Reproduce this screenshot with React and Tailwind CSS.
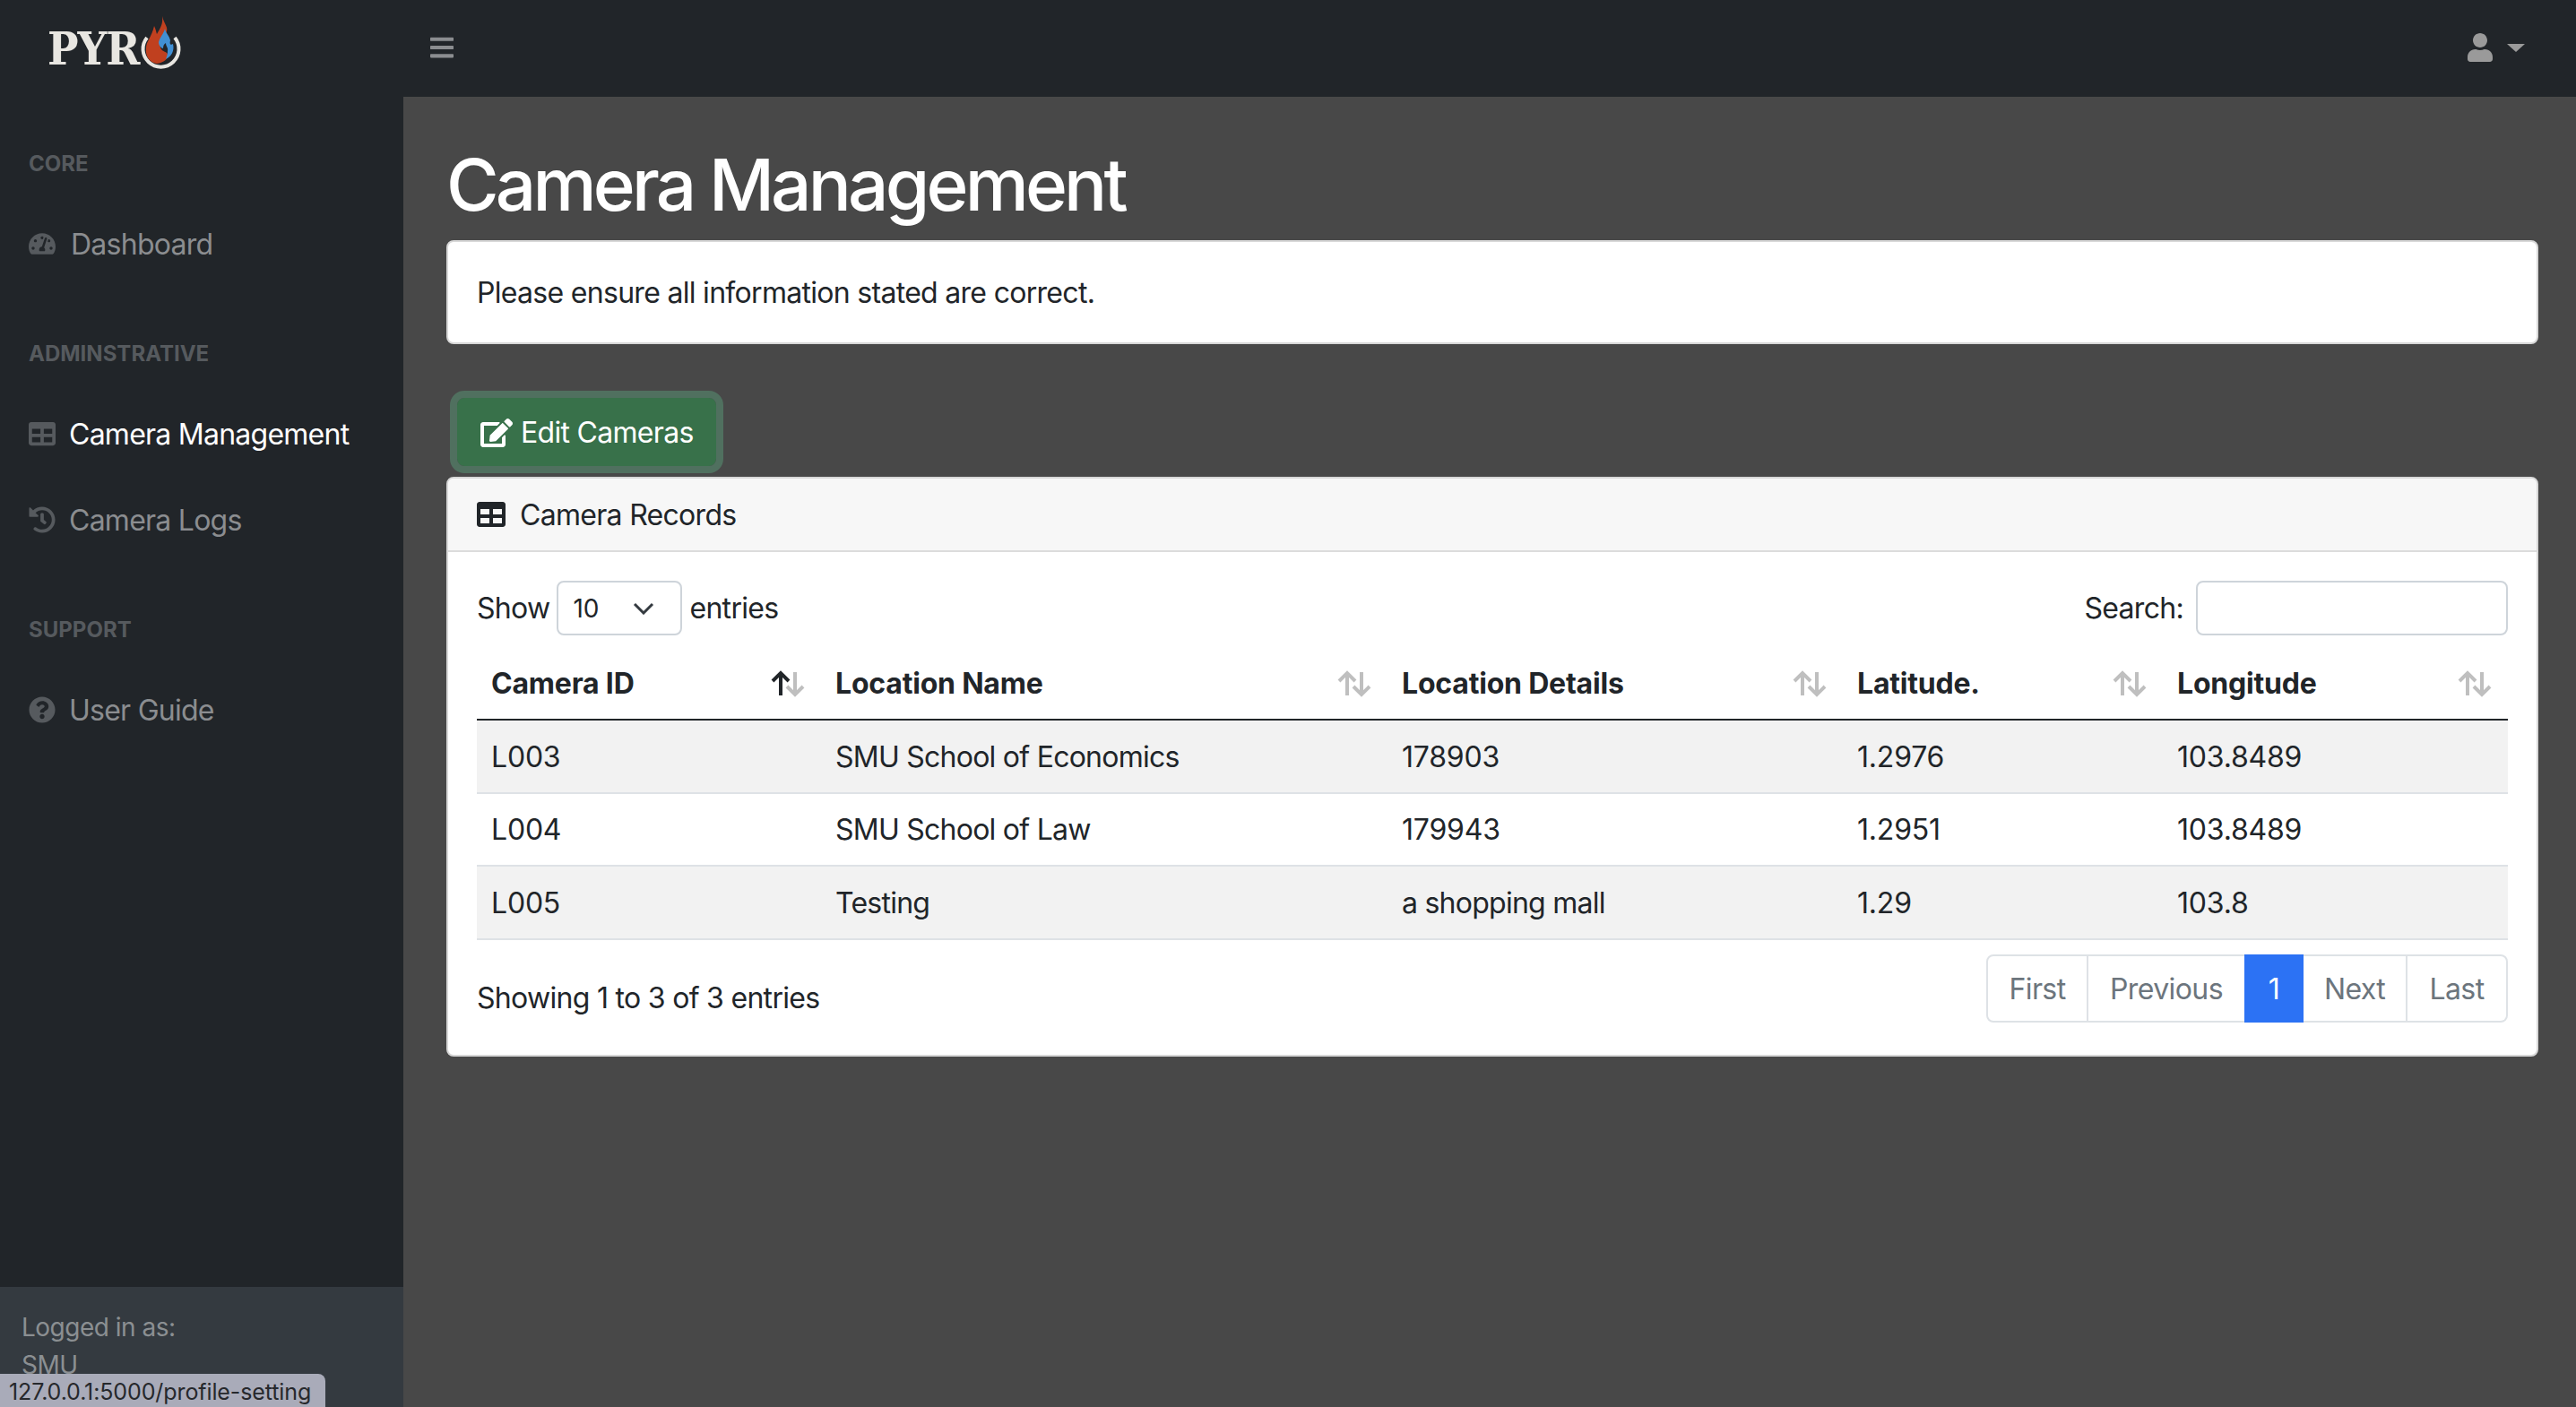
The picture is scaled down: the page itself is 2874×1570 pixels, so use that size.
import React from "react";
import { FaTachometerAlt, FaTable, FaHistory, FaQuestionCircle, FaUser, FaEdit, FaBars } from "react-icons/fa";

const font = { fontFamily: "Inter, 'Liberation Sans', sans-serif" };

const rows = [
  ["L003", "SMU School of Economics", "178903", "1.2976", "103.8489"],
  ["L004", "SMU School of Law", "179943", "1.2951", "103.8489"],
  ["L005", "Testing", "a shopping mall", "1.29", "103.8"],
];

const columns = [
  { label: "Camera ID", width: "w-[384px]", sorted: true },
  { label: "Location Name", width: "w-[632px]" },
  { label: "Location Details", width: "w-[508px]" },
  { label: "Latitude.", width: "w-[357px]" },
  { label: "Longitude", width: "w-[385px]" },
];

const SortArrows = ({ sorted }) => (
  <svg width="38" height="30" viewBox="0 0 38 30" fill="none" strokeWidth="4" className="shrink-0 mr-[2px]">
    <g stroke={sorted ? "#212529" : "#bfbfbf"}>
      <path d="M11 28V3M2 12l9-9 9 9" />
    </g>
    <g stroke="#bfbfbf">
      <path d="M27 2v25M18 18l9 9 9-9" />
    </g>
  </svg>
);

const Logo = () => (
  <div className="flex items-start h-[108px] pl-[53px]">
    <span
      className="text-[51px] leading-none font-bold font-stretch-condensed text-[#e8e6e1] mt-[30px] tracking-[-1px]"
      style={{ fontFamily: "'DejaVu Serif', serif" }}
    >
      PYR
    </span>
    <svg width="60" height="75" viewBox="150 10 60 75" className="mt-[10px] ml-[-6px]">
      <path d="M165 43A20 20 0 1 0 196 43" fill="none" stroke="#e8e6e1" strokeWidth="4" />
      <path d="M182 19C184 28 190 32 186 38C181 43 178 48 180 54C182 60 188 58 188 62C189 66 184 71 176 72C168 71 163 64 164 55C164 47 170 43 173 30C175 34 175 36 176 39C180 32 183 28 182 19Z" fill="#c0401f" />
      <path d="M185 33C184 38 179 43 178 48C178 52 181 55 183 55C183 52 184 50 186 49C186 53 189 54 188 58C188 62 187 64 186 67C192 64 196 58 194 50C191 52 190 50 191 46C190 41 186 38 185 33Z" fill="#4190d4" />
    </svg>
  </div>
);

const Heading = ({ children }) => (
  <div className="pt-[57px] pb-[23px] px-[32px] text-[24px] leading-[36px] font-bold text-[#565a5e]">{children}</div>
);

const NavLink = ({ icon: Icon, active, gap = "gap-[15px]", children }) => (
  <div className={`flex items-center h-[96px] px-[32px] text-[32px] leading-[48px] tracking-[-0.75px] ${gap} ${active ? "text-white" : "text-[#8b8d90]"}`}>
    <Icon className="text-[#565a5e] w-[30px] h-[30px] shrink-0" />
    <span className="pt-[2px]">{children}</span>
  </div>
);

const PageButton = ({ width, active, last, children }) => (
  <div
    className={`flex items-center justify-center h-[76px] pt-[3px] tracking-[-0.6px] ${width} ${
      active ? "bg-[#2c72f4] text-white" : "text-[#6c757d] border-y-2 border-[#dee2e6]"
    } ${last ? "border-r-2 rounded-r-[8px]" : ""}`}
  >
    {children}
  </div>
);

export default function App() {
  return (
    <div className="relative flex flex-col w-[2874px] h-[1570px] overflow-hidden bg-[#484848] text-[#212529] text-[32px] leading-[48px]" style={font}>
      {/* Top bar */}
      <header className="flex items-center justify-between h-[108px] pb-[2px] bg-[#212529] shrink-0">
        <div className="flex items-center">
          <div className="w-[480px]">
            <Logo />
          </div>
          <FaBars className="w-[26px] h-[30px] text-[#8b8d90]" />
        </div>
        <div className="flex items-center gap-[15px] pr-[57px] text-[#9a9a9a]">
          <FaUser className="w-[30px] h-[32px]" />
          <div className="w-0 h-0 border-x-[10px] border-x-transparent border-t-[9px] border-t-[#9a9a9a]" />
        </div>
      </header>

      <div className="flex flex-1 min-h-0">
        {/* Sidebar */}
        <aside className="flex flex-col justify-between w-[450px] shrink-0 bg-[#212529]">
          <nav>
            <Heading>CORE</Heading>
            <NavLink icon={FaTachometerAlt} gap="gap-[17px]">Dashboard</NavLink>
            <Heading>ADMINSTRATIVE</Heading>
            <NavLink icon={FaTable} active>Camera Management</NavLink>
            <NavLink icon={FaHistory}>Camera Logs</NavLink>
            <Heading>SUPPORT</Heading>
            <NavLink icon={FaQuestionCircle}>User Guide</NavLink>
          </nav>
          <div className="h-[134px] overflow-hidden bg-[#343a40] px-[24px] pt-[24px] text-[28px] leading-[42px] tracking-[-0.5px] text-[#8b8f92]">
            <div>Logged in as:</div>
            <div>SMU</div>
          </div>
        </aside>

        {/* Content */}
        <main className="flex-1 px-[42px] pl-[48px] pt-[50px]">
          <h1 className="text-[80px] leading-[96px] font-medium text-white tracking-[-3.8px]">Camera Management</h1>

          <div className="mt-[14px] h-[116px] rounded-[8px] bg-white border-2 border-[#d8d8d8] px-[32px] pt-[2px] flex items-center tracking-[-0.7px]">
            Please ensure all information stated are correct.
          </div>

          <div className="mt-[60px] ml-[12px] flex items-center gap-[9px] w-[289px] h-[76px] pl-[26px] pt-[1px] rounded-[8px] bg-[#38714a] text-white whitespace-nowrap tracking-[-0.7px] outline-8 outline-[#50705f]">
            <FaEdit className="w-[36px] h-[32px] shrink-0" />
            <span>Edit Cameras</span>
          </div>

          <section className="mt-[12px] h-[647px] rounded-[8px] bg-white border-2 border-[#d8d8d8]">
            <div className="flex items-center gap-[16px] h-[82px] px-[32px] bg-[#f7f7f7] border-b-2 border-[#dcdcdc] rounded-t-[6px] tracking-[-0.7px]">
              <FaTable className="w-[32px] h-[32px] text-[#212529]" />
              <span className="pt-[2px]">Camera Records</span>
            </div>

            <div className="px-[32px] pt-[32px]">
              <div className="flex items-center justify-between h-[61px] tracking-[-0.7px]">
                <div className="flex items-center gap-[8px]">
                  <span>Show</span>
                  <div className="flex items-center justify-between w-[140px] h-[61px] pl-[16px] pr-[29px] border-2 border-[#ced4da] rounded-[8px] text-[28px] tracking-normal">
                    <span>10</span>
                    <svg width="24" height="14" viewBox="0 0 24 14" fill="none" stroke="#343a40" strokeWidth="3">
                      <path d="M2 2l10 10 10-10" />
                    </svg>
                  </div>
                  <span>entries</span>
                </div>
                <div className="flex items-center gap-[14px]">
                  <span>Search:</span>
                  <div className="w-[348px] h-[61px] border-2 border-[#ced4da] rounded-[8px]" />
                </div>
              </div>

              <table className="mt-[14px] w-[2266px] table-fixed border-collapse">
                <thead>
                  <tr className="border-b-2 border-[#212529]">
                    {columns.map((col) => (
                      <th key={col.label} className={`${col.width} h-[80px] px-[16px] text-left font-bold tracking-[-0.2px]`}>
                        <div className="flex items-center justify-between">
                          <span>{col.label}</span>
                          <SortArrows sorted={col.sorted} />
                        </div>
                      </th>
                    ))}
                  </tr>
                </thead>
                <tbody>
                  {rows.map((row, i) => (
                    <tr key={row[0]} className={`h-[81.5px] border-b-2 border-[#dee2e6] ${i % 2 === 0 ? "bg-[#f2f2f2]" : ""}`}>
                      {row.map((cell, j) => (
                        <td key={j} className={`px-[16px] pt-[2px] ${/[a-z]/.test(cell) ? "tracking-[-0.75px]" : "tracking-[-0.2px]"}`}>{cell}</td>
                      ))}
                    </tr>
                  ))}
                </tbody>
              </table>

              <div className="flex items-start justify-between mt-[16px]">
                <div className="mt-[25px] tracking-[-0.7px]">Showing 1 to 3 of 3 entries</div>
                <div className="flex ml-[-2px]">
                  <PageButton width="w-[114px] border-l-2 border-r-2 rounded-l-[8px]">First</PageButton>
                  <PageButton width="w-[174px]">Previous</PageButton>
                  <PageButton width="w-[66px]" active>1</PageButton>
                  <PageButton width="w-[116px] border-r-2">Next</PageButton>
                  <PageButton width="w-[112px]" last>Last</PageButton>
                </div>
              </div>
            </div>
          </section>
        </main>
      </div>

      {/* Browser status bubble */}
      <div className="absolute left-0 bottom-0 w-[363px] h-[37px] rounded-tr-[8px] bg-[#a9abb9] pl-[10px] pt-[3px] text-[25px] leading-[34px] tracking-[-0.1px] text-[#26282c]">
        127.0.0.1:5000/profile-setting
      </div>
    </div>
  );
}
